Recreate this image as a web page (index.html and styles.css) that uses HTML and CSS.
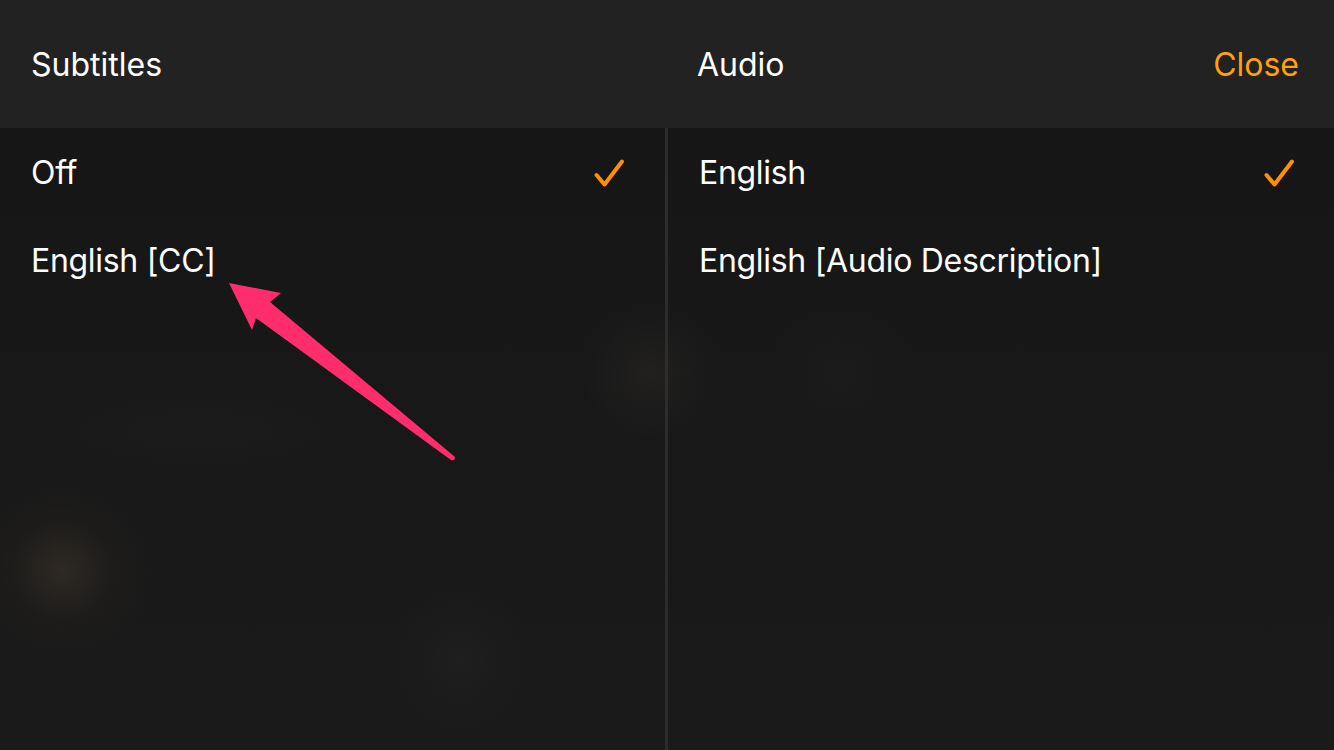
FILE: index.html
```html
<!DOCTYPE html>
<html>
<head>
<meta charset="utf-8">
<link rel="stylesheet" href="styles.css">
</head>
<body>
<div class="screen">
  <header class="header">
    <div class="hcol left"><span class="title">Subtitles</span></div>
    <div class="hcol right"><span class="title">Audio</span><span class="close">Close</span></div>
  </header>
  <main class="body">
    <section class="col">
      <div class="row"><span>Off</span>
        <svg class="check" width="34" height="32" viewBox="0 0 34 32"><path d="M3.5 17 L11.5 26.5 L29 3.5" fill="none" stroke="#ff9100" stroke-width="4" stroke-linecap="round" stroke-linejoin="round"/></svg>
      </div>
      <div class="row"><span>English [CC]</span></div>
    </section>
    <div class="divider"></div>
    <section class="col">
      <div class="row"><span>English</span>
        <svg class="check" width="34" height="32" viewBox="0 0 34 32"><path d="M3.5 17 L11.5 26.5 L29 3.5" fill="none" stroke="#ff9100" stroke-width="4" stroke-linecap="round" stroke-linejoin="round"/></svg>
      </div>
      <div class="row"><span>English [Audio Description]</span></div>
    </section>
  </main>
  <svg class="arrow" width="1334" height="750" viewBox="0 0 1334 750">
    <path d="M229 283 L281 293 L270 302 L455 457 Q455 461 451 460 L256 318 L252 330 Z" fill="#ff2d6e"/>
  </svg>
</div>
</body>
</html>
```
FILE: styles.css
```css
html, body { margin: 0; padding: 0; }
body {
  width: 1334px; height: 750px; overflow: hidden;
  font-family: Inter, "Noto Sans", sans-serif;
  color: #fff;
  background: #161616;
}
.screen { position: relative; width: 1334px; height: 750px; display: flex; flex-direction: column; }
.header {
  height: 128px; background: #222222;
  display: flex; flex-shrink: 0;
}
.hcol { display: flex; align-items: center; justify-content: space-between; }
.hcol.left { width: 666px; padding-left: 31px; box-sizing: border-box; }
.hcol.right { flex: 1; padding-left: 31px; padding-right: 35px; }
.title { font-size: 32px; }
.close { font-size: 32px; color: #ffa10a; }
.body {
  flex: 1; display: flex;
  background:
    radial-gradient(circle at 62px 442px, rgba(60,52,44,0.6) 0, rgba(40,36,32,0.3) 50px, rgba(22,22,22,0) 90px),
    radial-gradient(circle at 650px 245px, rgba(45,42,40,0.45) 0, rgba(22,22,22,0) 70px),
    radial-gradient(circle at 460px 532px, rgba(36,36,36,0.5) 0, rgba(22,22,22,0) 70px),
    radial-gradient(circle at 840px 245px, rgba(30,30,30,0.5) 0, rgba(22,22,22,0) 70px),
    radial-gradient(ellipse at 200px 300px, rgba(30,30,30,0.6) 0, rgba(22,22,22,0) 180px),
    linear-gradient(#161616, #1a1a1a);
}
.col { flex: 1; display: flex; flex-direction: column; }
.col:first-child { flex: 0 0 665px; padding-left: 31px; padding-right: 38px; box-sizing: border-box; }
.col:last-child { padding-left: 31px; padding-right: 37px; }
.divider { width: 3px; background: #2c2c2c; }
.row {
  height: 88px; display: flex; align-items: center; justify-content: space-between;
  font-size: 32px; letter-spacing: -0.3px;
}
.check { display: block; margin-top: 3px; }
.arrow { position: absolute; left: 0; top: 0; pointer-events: none; }
```
